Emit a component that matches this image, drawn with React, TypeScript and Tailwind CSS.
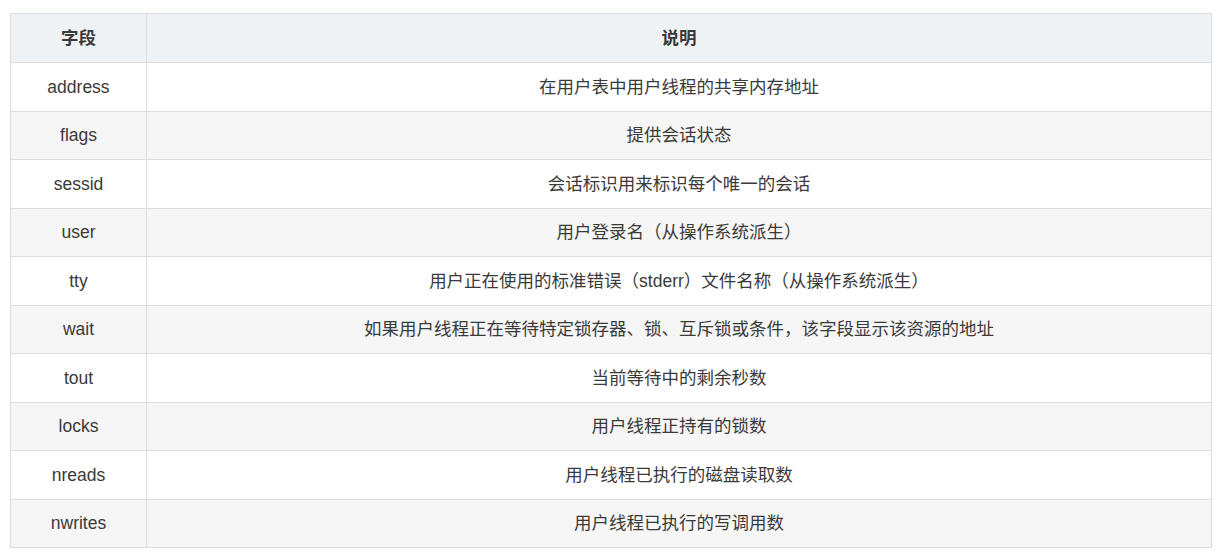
const rows: [string, string][] = [
  ["address", "在用户表中用户线程的共享内存地址"],
  ["flags", "提供会话状态"],
  ["sessid", "会话标识用来标识每个唯一的会话"],
  ["user", "用户登录名（从操作系统派生）"],
  ["tty", "用户正在使用的标准错误（stderr）文件名称（从操作系统派生）"],
  ["wait", "如果用户线程正在等待特定锁存器、锁、互斥锁或条件，该字段显示该资源的地址"],
  ["tout", "当前等待中的剩余秒数"],
  ["locks", "用户线程正持有的锁数"],
  ["nreads", "用户线程已执行的磁盘读取数"],
  ["nwrites", "用户线程已执行的写调用数"],
];

export default function App() {
  return (
    <div className="w-[1226px] h-[559px] bg-white pt-[13px] pl-[10px] font-['Liberation_Sans','Noto_Sans_CJK_SC',sans-serif] text-[17.5px] text-[#3a3a3a]">
      <table className="w-[1202px] border-collapse border border-[#dddddd]">
        <thead>
          <tr className="bg-[#eff2f5] h-[49px]">
            <th className="w-[136px] border border-[#dddddd] font-bold text-center">字段</th>
            <th className="border border-[#dddddd] font-bold text-center">说明</th>
          </tr>
        </thead>
        <tbody>
          {rows.map(([field, desc], i) => (
            <tr key={field} className={`h-[48.5px] ${i % 2 === 1 ? "bg-[#f6f6f6]" : "bg-white"}`}>
              <td className="border border-[#dddddd] text-center">{field}</td>
              <td className="border border-[#dddddd] text-center">{desc}</td>
            </tr>
          ))}
        </tbody>
      </table>
    </div>
  );
}
